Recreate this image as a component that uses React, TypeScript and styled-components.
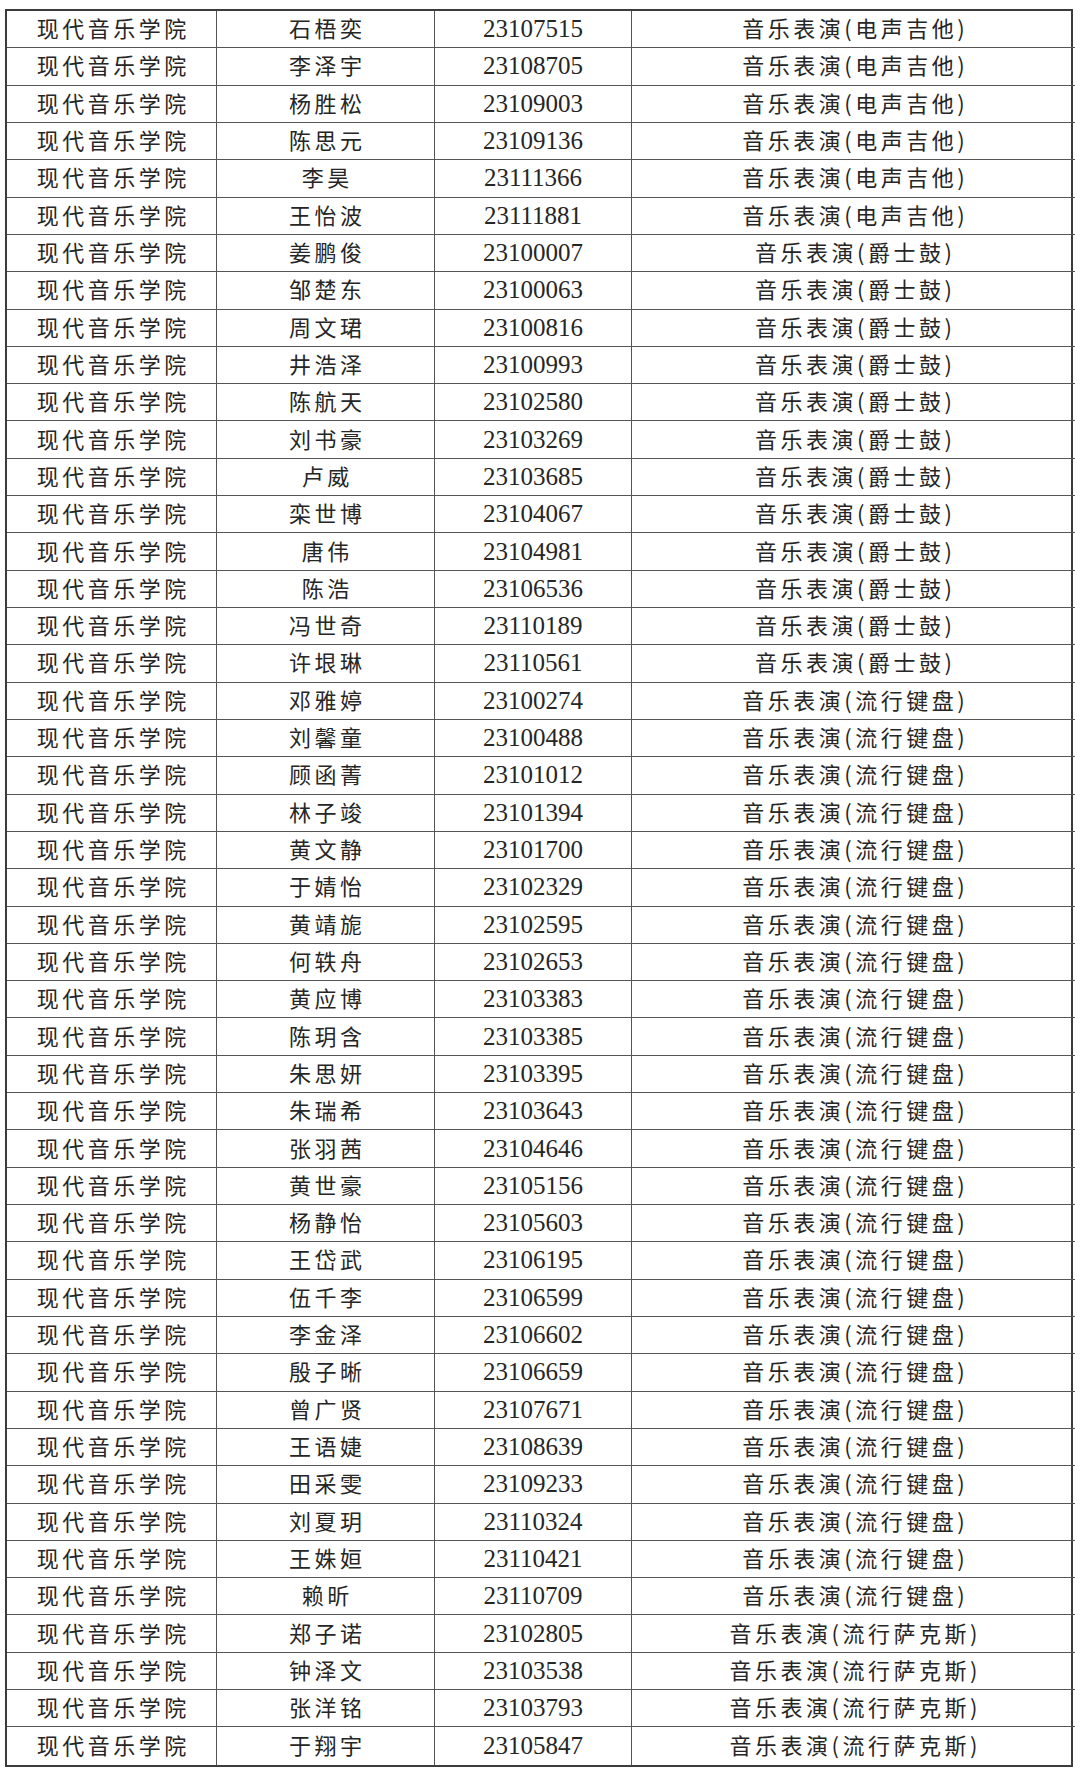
import React from "react";
import styled, { createGlobalStyle } from "styled-components";

const GlobalStyle = createGlobalStyle`
  html, body {
    margin: 0;
    padding: 0;
    background: #ffffff;
  }
  body {
    font-family: "Liberation Serif", "Noto Sans CJK SC", serif;
  }
`;

type Row = [string, string, string];

const GUITAR = "音乐表演(电声吉他)";
const DRUM = "音乐表演(爵士鼓)";
const KEYS = "音乐表演(流行键盘)";
const SAX = "音乐表演(流行萨克斯)";

const rows: Row[] = [
  ["石梧奕", "23107515", GUITAR],
  ["李泽宇", "23108705", GUITAR],
  ["杨胜松", "23109003", GUITAR],
  ["陈思元", "23109136", GUITAR],
  ["李昊", "23111366", GUITAR],
  ["王怡波", "23111881", GUITAR],
  ["姜鹏俊", "23100007", DRUM],
  ["邹楚东", "23100063", DRUM],
  ["周文珺", "23100816", DRUM],
  ["井浩泽", "23100993", DRUM],
  ["陈航天", "23102580", DRUM],
  ["刘书豪", "23103269", DRUM],
  ["卢威", "23103685", DRUM],
  ["栾世博", "23104067", DRUM],
  ["唐伟", "23104981", DRUM],
  ["陈浩", "23106536", DRUM],
  ["冯世奇", "23110189", DRUM],
  ["许垠琳", "23110561", DRUM],
  ["邓雅婷", "23100274", KEYS],
  ["刘馨童", "23100488", KEYS],
  ["顾函菁", "23101012", KEYS],
  ["林子竣", "23101394", KEYS],
  ["黄文静", "23101700", KEYS],
  ["于婧怡", "23102329", KEYS],
  ["黄靖旎", "23102595", KEYS],
  ["何轶舟", "23102653", KEYS],
  ["黄应博", "23103383", KEYS],
  ["陈玥含", "23103385", KEYS],
  ["朱思妍", "23103395", KEYS],
  ["朱瑞希", "23103643", KEYS],
  ["张羽茜", "23104646", KEYS],
  ["黄世豪", "23105156", KEYS],
  ["杨静怡", "23105603", KEYS],
  ["王岱武", "23106195", KEYS],
  ["伍千李", "23106599", KEYS],
  ["李金泽", "23106602", KEYS],
  ["殷子晰", "23106659", KEYS],
  ["曾广贤", "23107671", KEYS],
  ["王语婕", "23108639", KEYS],
  ["田采雯", "23109233", KEYS],
  ["刘夏玥", "23110324", KEYS],
  ["王姝姮", "23110421", KEYS],
  ["赖昕", "23110709", KEYS],
  ["郑子诺", "23102805", SAX],
  ["钟泽文", "23103538", SAX],
  ["张洋铭", "23103793", SAX],
  ["于翔宇", "23105847", SAX],
];

const Page = styled.div`
  width: 1080px;
  min-height: 1772px;
  padding: 9px 0 0 5px;
  box-sizing: border-box;
  background: #ffffff;
`;

const Grid = styled.div`
  display: grid;
  grid-template-columns: 210px 218px 197px 443px;
  grid-auto-rows: 37.32px;
  width: 1068px;
  box-sizing: border-box;
  border: 2px solid #3c3c3c;
`;

const Cell = styled.div<{ $last?: boolean; $bottom?: boolean; $kind: "cjk" | "num" }>`
  display: flex;
  align-items: center;
  justify-content: center;
  box-sizing: border-box;
  border-right: ${(p) => (p.$last ? "none" : "1.5px solid #555")};
  border-bottom: ${(p) => (p.$bottom ? "none" : "1.5px solid #555")};
  color: #262626;
  white-space: nowrap;
  overflow: hidden;
  line-height: 1;
  font-family: ${(p) =>
    p.$kind === "num"
      ? `"Liberation Serif", "Noto Sans CJK SC", serif`
      : `"Noto Sans CJK SC", "Liberation Serif", sans-serif`};
  font-size: ${(p) => (p.$kind === "num" ? "25px" : "22px")};
  letter-spacing: ${(p) => (p.$kind === "num" ? "0" : "3.5px")};
  font-weight: 400;
  padding-bottom: ${(p) => (p.$kind === "num" ? "1px" : "4px")};
  padding-left: ${(p) => (p.$kind === "num" ? "0" : "3.5px")};
`;

export default function App() {
  return (
    <>
      <GlobalStyle />
      <Page>
        <Grid>
          {rows.map((r, i) => {
            const bottom = i === rows.length - 1;
            return (
              <React.Fragment key={r[1]}>
                <Cell $kind="cjk" $bottom={bottom}>现代音乐学院</Cell>
                <Cell $kind="cjk" $bottom={bottom}>{r[0]}</Cell>
                <Cell $kind="num" $bottom={bottom}>{r[1]}</Cell>
                <Cell $kind="cjk" $bottom={bottom} $last>{r[2]}</Cell>
              </React.Fragment>
            );
          })}
        </Grid>
      </Page>
    </>
  );
}
